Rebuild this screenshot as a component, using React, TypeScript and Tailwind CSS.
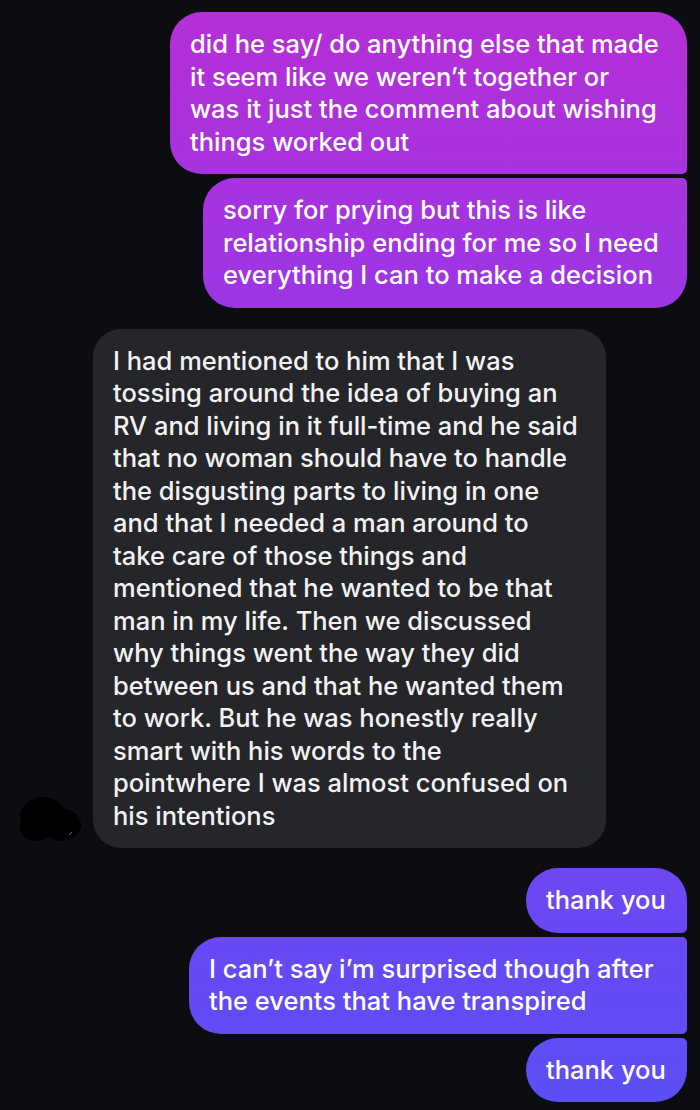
import React from "react";

type Msg = {
  lines: string[];
  width: string;
  corners: string;
};

const firstGroup: Msg[] = [
  {
    lines: [
      "did he say/ do anything else that made",
      "it seem like we weren’t together or",
      "was it just the comment about wishing",
      "things worked out",
    ],
    width: "w-[517px]",
    corners: "rounded-[32px] rounded-br-[5px]",
  },
  {
    lines: [
      "sorry for prying but this is like",
      "relationship ending for me so I need",
      "everything I can to make a decision",
    ],
    width: "w-[484px]",
    corners: "rounded-[32px] rounded-tr-[5px]",
  },
];

const received = [
  "I had mentioned to him that I was",
  "tossing around the idea of buying an",
  "RV and living in it full-time and he said",
  "that no woman should have to handle",
  "the disgusting parts to living in one",
  "and that I needed a man around to",
  "take care of those things and",
  "mentioned that he wanted to be that",
  "man in my life. Then we discussed",
  "why things went the way they did",
  "between us and that he wanted them",
  "to work. But he was honestly really",
  "smart with his words to the",
  "pointwhere I was almost confused on",
  "his intentions",
];

const lastGroup: Msg[] = [
  {
    lines: ["thank you"],
    width: "w-[161px]",
    corners: "rounded-[32px] rounded-br-[5px]",
  },
  {
    lines: ["I can’t say i’m surprised though after", "the events that have transpired"],
    width: "w-[498px]",
    corners: "rounded-[32px] rounded-r-[5px]",
  },
  {
    lines: ["thank you"],
    width: "w-[161px]",
    corners: "rounded-[32px] rounded-tr-[5px]",
  },
];

function SentBubble({ msg }: { msg: Msg }) {
  return (
    <div
      className={`${msg.width} ${msg.corners} bg-fixed bg-[linear-gradient(180deg,#b62fd6_0%,#9a36e6_30%,#7a41f0_65%,#5a4ff6_100%)] px-5 py-4 text-white`}
    >
      {msg.lines.map((l) => (
        <div key={l} className="whitespace-nowrap">
          {l}
        </div>
      ))}
    </div>
  );
}

// scribbled-out avatar
function Avatar() {
  return (
    <svg width="68" height="48" viewBox="0 0 68 48" className="shrink-0">
      <ellipse cx="27" cy="22" rx="23" ry="20" fill="#000" />
      <ellipse cx="46" cy="30" rx="19" ry="16" fill="#000" />
      <ellipse cx="20" cy="33" rx="16" ry="13" fill="#000" />
      <path d="M53 40 L56 37" stroke="#6b6b6b" strokeWidth="1" />
    </svg>
  );
}

export default function App() {
  return (
    <div className="h-[1110px] w-[700px] overflow-hidden bg-[#0b0d11] font-['Inter','Liberation_Sans',sans-serif] text-[25.5px] leading-[32.5px] font-medium">
      <div className="flex flex-col items-end gap-[4px] pt-[12px] pr-[13px]">
        {firstGroup.map((m, i) => (
          <SentBubble key={i} msg={m} />
        ))}
      </div>

      <div className="mt-[21px] flex items-end pl-[16px]">
        <div className="mb-[5px] mr-[9px]">
          <Avatar />
        </div>
        <div className="w-[513px] rounded-[28px] bg-[#25262a] px-5 py-4 text-[#f2f2f2]">
          {received.map((l) => (
            <div key={l} className="whitespace-nowrap">
              {l}
            </div>
          ))}
        </div>
      </div>

      <div className="mt-[20px] flex flex-col items-end gap-[4px] pr-[13px]">
        {lastGroup.map((m, i) => (
          <SentBubble key={i} msg={m} />
        ))}
      </div>
    </div>
  );
}
